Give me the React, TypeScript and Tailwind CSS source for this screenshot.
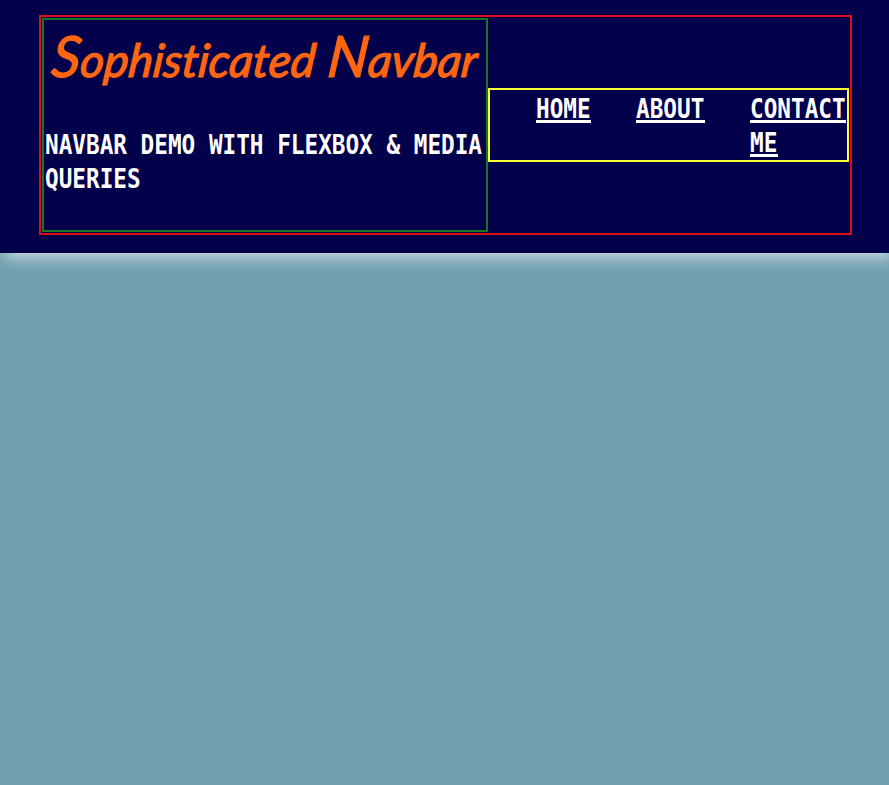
import type { ReactNode } from "react";

function Line({ children }: { children: ReactNode }) {
  return (
    <span className="block h-[34px] origin-top-left scale-x-[0.995] scale-y-[1.2] whitespace-pre text-[22.8px] leading-[31px] font-bold">
      {children}
    </span>
  );
}

function LinkLine({ children }: { children: ReactNode }) {
  return (
    <span className="block h-[34px] w-fit">
      <span className="block h-[33px] border-b-[3px] border-white">
        <Line>{children}</Line>
      </span>
    </span>
  );
}

export default function App() {
  return (
    <div className="h-[785px] overflow-hidden bg-[#729fae] font-['DejaVu_Sans_Mono',monospace] text-white">
      <header className="h-[253px] bg-[#03004b] pt-[15px] pr-[37px] pl-[39px] shadow-[4px_4px_15px_#d2e0ec]">
        <div className="flex h-[220px] border-2 border-[#d90f16] p-px">
          <div className="h-[214px] w-[446px] shrink-0 border-2 border-[#147820] px-px">
            <h1 className="flex h-[106px] gap-[12px] pt-[5px] font-[Lato,sans-serif] text-[46px] leading-[68px] font-normal whitespace-nowrap text-[#ff660f] italic [-webkit-text-stroke:1.2px_#ff660f] [font-variant-ligatures:none]">
              <span className="block w-[264px] origin-bottom-left -skew-x-6 tracking-[0px] first-letter:text-[57px] first-letter:leading-[60px]">Sophisticated</span>
              <span className="block w-[148px] origin-bottom-left -skew-x-6 tracking-[0px] first-letter:text-[57px] first-letter:leading-[60px]">Navbar</span>
            </h1>
            <p>
              <Line>NAVBAR DEMO WITH FLEXBOX &amp; MEDIA</Line>
              <Line>QUERIES</Line>
            </p>
          </div>
          <nav className="mt-[70px] flex h-[74px] w-[361px] shrink-0 gap-[45.4px] border-2 border-[#ffff32] pl-[46px]">
            <a href="#home"><LinkLine>HOME</LinkLine></a>
            <a href="#about"><LinkLine>ABOUT</LinkLine></a>
            <a href="#contact"><LinkLine>CONTACT</LinkLine><LinkLine>ME</LinkLine></a>
          </nav>
        </div>
      </header>
    </div>
  );
}
